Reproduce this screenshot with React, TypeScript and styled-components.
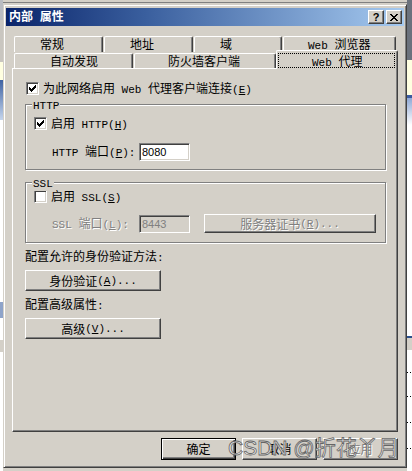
import React from "react";
import styled, { createGlobalStyle, css } from "styled-components";

const FACE = "#d4d0c8";
const SHADOW = "#808080";
const DARK = "#404040";

const Global = createGlobalStyle`
  html, body { margin: 0; padding: 0; background: ${FACE}; }
  body {
    font-family: "Noto Sans CJK SC", "Liberation Sans", sans-serif;
    font-size: 12px;
    color: #000;
  }
`;

/* ---------- text helper ---------- */
const Lat = styled.span`
  font-family: "Liberation Mono", "DejaVu Sans Mono", monospace;
  font-size: 11px;
`;

function txt(s: string): React.ReactNode[] {
  const runs = s.match(/[\x20-\x7E]+|[^\x20-\x7E]+/g) || [];
  return runs.map((run, i) => {
    if (/^[\x20-\x7E]/.test(run)) {
      const segs = run.split(/&(.)/);
      return (
        <Lat key={i}>
          {segs.map((seg, j) => (j % 2 ? <u key={j}>{seg}</u> : seg))}
        </Lat>
      );
    }
    return <span key={i}>{run}</span>;
  });
}

/* ---------- desktop behind ---------- */
const Desktop = styled.div`
  position: relative;
  width: 412px;
  height: 471px;
  overflow: hidden;
  display: flex;
`;
const Strip = styled.div<{ $w: number }>`
  width: ${(p) => p.$w}px;
  flex: none;
  display: flex;
  flex-direction: column;
`;
const Middle = styled.div`
  flex: 1;
  display: flex;
  flex-direction: column;
  background: ${FACE};
`;
const Band = styled.div<{ $h: number; $bg: string }>`
  height: ${(p) => p.$h}px;
  flex: none;
  background: ${(p) => p.$bg};
`;
const dots = "repeating-linear-gradient(90deg, #000 0 1px, #fff 1px 3px)";

/* ---------- window ---------- */
const Window = styled.div`
  position: absolute;
  left: 3px;
  top: 4px;
  width: 404px;
  height: 464px;
  box-sizing: border-box;
  background: ${FACE};
  border: 1px solid;
  border-color: ${FACE} ${DARK} ${DARK} ${FACE};
  box-shadow: inset 1px 1px #fff, inset -1px -1px ${SHADOW};
  padding: 3px 2px 2px 2px;
  display: flex;
  flex-direction: column;
`;
const TitleBar = styled.div`
  height: 18px;
  flex: none;
  display: flex;
  align-items: center;
  justify-content: space-between;
  padding: 0 2px 0 3px;
  background: linear-gradient(90deg, #0a246a 0%, #3a5f9e 35%, #a6caf0 100%);
`;
const Title = styled.div`
  color: #fff;
  font-weight: bold;
  font-size: 12px;
  line-height: 14px;
  white-space: nowrap;
`;
const CapButtons = styled.div`
  display: flex;
  gap: 2px;
`;
const CapButton = styled.div`
  width: 16px;
  height: 14px;
  box-sizing: border-box;
  background: ${FACE};
  border: 1px solid;
  border-color: #fff ${DARK} ${DARK} #fff;
  box-shadow: inset -1px -1px ${SHADOW};
  display: flex;
  align-items: center;
  justify-content: center;
  font: bold 11px "Liberation Sans", sans-serif;
  line-height: 12px;
  color: #000;
`;

/* ---------- tabs ---------- */
const TabArea = styled.div`
  margin: 10px 6px 0 6px;
  display: flex;
  flex-direction: column;
`;
const TabRow = styled.div`
  height: 16px;
  display: flex;
  gap: 1px;
  padding-left: 2px;
`;
const Tab = styled.div<{ $w: number; $pad: number; $front?: boolean }>`
  box-sizing: border-box;
  width: ${(p) => p.$w}px;
  flex: none;
  height: ${(p) => (p.$front ? 15 : 16)}px;
  margin-top: ${(p) => (p.$front ? 1 : 0)}px;
  background: ${FACE};
  border-left: 1px solid #fff;
  border-top: 1px solid #fff;
  border-right: 1px solid ${DARK};
  box-shadow: inset -1px 0 ${SHADOW};
  border-radius: 2px 2px 0 0;
  padding-left: ${(p) => p.$pad}px;
  line-height: 14px;
  white-space: nowrap;
  overflow: hidden;
`;
const SelTab = styled.div<{ $w: number }>`
  position: relative;
  z-index: 2;
  box-sizing: border-box;
  width: ${(p) => p.$w}px;
  flex: none;
  height: 19px;
  margin: -2px 0 0 -1px;
  background: ${FACE};
  border-left: 1px solid #fff;
  border-top: 1px solid #fff;
  border-right: 1px solid ${DARK};
  box-shadow: inset -1px 0 ${SHADOW};
  border-radius: 2px 2px 0 0;
  padding: 2px 2px 0 1px;
`;
const Focus = styled.div<{ $pad: number }>`
  box-sizing: border-box;
  height: 15px;
  border: 1px dotted #000;
  padding-left: ${(p) => p.$pad}px;
  line-height: 13px;
  white-space: nowrap;
`;

/* ---------- panel ---------- */
const Panel = styled.div`
  margin: 0 6px;
  height: 364px;
  flex: none;
  box-sizing: border-box;
  border: 1px solid;
  border-color: #fff ${DARK} ${DARK} #fff;
  box-shadow: inset -1px -1px ${SHADOW};
  padding: 13px 11px 0 12px;
  display: flex;
  flex-direction: column;
  align-items: flex-start;
`;
const CheckRow = styled.div<{ $mt?: number; $ml?: number }>`
  display: flex;
  align-items: center;
  gap: 4px;
  height: 13px;
  margin-top: ${(p) => p.$mt || 0}px;
  margin-left: ${(p) => p.$ml || 0}px;
  line-height: 14px;
  white-space: nowrap;
`;
const Check = styled.span`
  box-sizing: border-box;
  width: 13px;
  height: 13px;
  flex: none;
  background: #fff;
  border: 1px solid;
  border-color: ${SHADOW} #fff #fff ${SHADOW};
  box-shadow: inset 1px 1px ${DARK}, inset -1px -1px ${FACE};
  display: flex;
  align-items: center;
  justify-content: center;
`;
const Group = styled.div<{ $h: number; $pt: number; $mt: number }>`
  position: relative;
  box-sizing: border-box;
  width: 361px;
  height: ${(p) => p.$h}px;
  margin-top: ${(p) => p.$mt}px;
  flex: none;
  border: 1px solid ${SHADOW};
  box-shadow: inset 1px 1px #fff, 1px 1px #fff;
  padding: ${(p) => p.$pt}px 0 0 8px;
  display: flex;
  flex-direction: column;
  align-items: flex-start;
`;
const Legend = styled.span`
  position: absolute;
  top: -8px;
  left: 6px;
  padding: 0 1px;
  background: ${FACE};
  line-height: 14px;
`;
const FieldRow = styled.div<{ $mt: number }>`
  display: flex;
  align-items: center;
  margin: ${(p) => p.$mt}px 0 0 18px;
`;
const FieldLabel = styled.span<{ $disabled?: boolean }>`
  width: 87px;
  flex: none;
  line-height: 14px;
  white-space: nowrap;
  ${(p) =>
    p.$disabled &&
    css`
      color: ${SHADOW};
      text-shadow: 1px 1px #fff;
    `}
`;
const Input = styled.div<{ $disabled?: boolean }>`
  box-sizing: border-box;
  width: 51px;
  height: 18px;
  flex: none;
  background: ${(p) => (p.$disabled ? FACE : "#fff")};
  border: 1px solid;
  border-color: ${SHADOW} #fff #fff ${SHADOW};
  box-shadow: inset 1px 1px ${DARK}, inset -1px -1px ${FACE};
  padding-left: 2px;
  display: flex;
  align-items: center;
  font: 11px "Liberation Sans", sans-serif;
  color: ${(p) => (p.$disabled ? SHADOW : "#000")};
`;
const Caption = styled.div<{ $mt: number }>`
  margin-top: ${(p) => p.$mt}px;
  line-height: 14px;
  white-space: nowrap;
`;
const Button = styled.div<{
  $w: number;
  $h: number;
  $mt?: number;
  $ml?: number;
  $default?: boolean;
  $disabled?: boolean;
}>`
  box-sizing: border-box;
  width: ${(p) => p.$w}px;
  height: ${(p) => p.$h}px;
  flex: none;
  margin-top: ${(p) => p.$mt || 0}px;
  margin-left: ${(p) => p.$ml || 0}px;
  background: ${FACE};
  border: 1px solid;
  border-color: #fff ${DARK} ${DARK} #fff;
  box-shadow: inset -1px -1px ${SHADOW};
  display: flex;
  align-items: center;
  justify-content: center;
  line-height: 14px;
  white-space: nowrap;
  ${(p) =>
    p.$default &&
    css`
      border-color: #000;
      box-shadow: inset 1px 1px #fff, inset -1px -1px ${DARK},
        inset -2px -2px ${SHADOW};
    `}
  ${(p) =>
    p.$disabled &&
    css`
      color: ${SHADOW};
      text-shadow: 1px 1px #fff;
    `}
`;
const ButtonBar = styled.div`
  display: flex;
  justify-content: flex-end;
  gap: 6px;
  margin: 6px 6px 0 0;
`;
const Watermark = styled.div`
  position: absolute;
  left: 224px;
  top: 431px;
  font-family: "Liberation Sans", "Noto Sans CJK SC", sans-serif;
  font-size: 21px;
  line-height: 24px;
  white-space: nowrap;
  color: rgba(240, 240, 240, 0.9);
  -webkit-text-stroke: 0.8px #666666;
  pointer-events: none;
`;

const CheckMark = () => (
  <svg width="7" height="7" viewBox="0 0 7 7" shapeRendering="crispEdges">
    <path
      d="M6 0h1v1h-1z M5 1h2v1h-2z M0 2h1v1h-1z M4 2h3v1h-3z M0 3h2v1h-2z M3 3h3v1h-3z M0 4h5v1h-5z M1 5h3v1h-3z M2 6h1v1h-1z"
      fill="#000"
    />
  </svg>
);

const CloseGlyph = () => (
  <svg width="8" height="7" viewBox="0 0 8 7" shapeRendering="crispEdges">
    <path
      d="M0 0h2v1h-2z M6 0h2v1h-2z M1 1h2v1h-2z M5 1h2v1h-2z M2 2h4v1h-4z M3 3h2v1h-2z M2 4h4v1h-4z M1 5h2v1h-2z M5 5h2v1h-2z M0 6h2v1h-2z M6 6h2v1h-2z"
      fill="#000"
    />
  </svg>
);

export default function App() {
  return (
    <>
      <Global />
      <Desktop>
        <Strip $w={3}>
          <Band $h={20} $bg="#b9bcc2" />
          <Band $h={42} $bg="#c9c6c0" />
          <Band $h={18} $bg="#ffffe1" />
          <Band $h={40} $bg="linear-gradient(180deg,#3f63a3,#c5d5ec)" />
          <Band $h={182} $bg="#ffffff" />
          <Band $h={16} $bg="#8ea3c9" />
          <Band $h={22} $bg="#ffffff" />
          <Band $h={12} $bg={FACE} />
          <Band $h={119} $bg="#ffffff" />
        </Strip>
        <Middle>
          <Band $h={2} $bg={FACE} />
          <Band $h={1} $bg={SHADOW} />
        </Middle>
        <Strip $w={5}>
          <Band $h={60} $bg="#6b727d" />
          <Band $h={35} $bg="#ffffe1" />
          <Band $h={3} $bg="#3b5ba0" />
          <Band $h={27} $bg="linear-gradient(180deg,#8fa9d6,#ffffff)" />
          <Band $h={211} $bg="#ffffff" />
          <Band $h={2} $bg="#2b4f8c" />
          <Band $h={12} $bg={FACE} />
          <Band $h={22} $bg="#ffffff" />
          <Band $h={1} $bg={dots} />
          <Band $h={23} $bg="#ffffff" />
          <Band $h={1} $bg={dots} />
          <Band $h={25} $bg="#ffffff" />
          <Band $h={1} $bg={dots} />
          <Band $h={25} $bg="#ffffff" />
          <Band $h={1} $bg={dots} />
          <Band $h={30} $bg="#ffffff" />
        </Strip>

        <Window>
          <TitleBar>
            <Title>{txt("内部 属性")}</Title>
            <CapButtons>
              <CapButton>?</CapButton>
              <CapButton>
                <CloseGlyph />
              </CapButton>
            </CapButtons>
          </TitleBar>

          <TabArea>
            <TabRow>
              <Tab $w={89} $pad={25}>{txt("常规")}</Tab>
              <Tab $w={89} $pad={25}>{txt("地址")}</Tab>
              <Tab $w={88} $pad={25}>{txt("域")}</Tab>
              <Tab $w={113} $pad={24}>{txt("Web 浏览器")}</Tab>
            </TabRow>
            <TabRow>
              <Tab $w={119} $pad={35} $front>{txt("自动发现")}</Tab>
              <Tab $w={142} $pad={33} $front>{txt("防火墙客户端")}</Tab>
              <SelTab $w={122}>
                <Focus $pad={33}>{txt("Web 代理")}</Focus>
              </SelTab>
            </TabRow>
          </TabArea>

          <Panel>
            <CheckRow $ml={1}>
              <Check>
                <CheckMark />
              </Check>
              <span>{txt("为此网络启用 Web 代理客户端连接(&E)")}</span>
            </CheckRow>

            <Group $h={66} $pt={12} $mt={9}>
              <Legend>{txt("HTTP")}</Legend>
              <CheckRow>
                <Check>
                  <CheckMark />
                </Check>
                <span>{txt("启用 HTTP(&H)")}</span>
              </CheckRow>
              <FieldRow $mt={13}>
                <FieldLabel>{txt("HTTP 端口(&P):")}</FieldLabel>
                <Input>8080</Input>
              </FieldRow>
            </Group>

            <Group $h={61} $pt={7} $mt={12}>
              <Legend>{txt("SSL")}</Legend>
              <CheckRow>
                <Check />
                <span>{txt("启用 SSL(&S)")}</span>
              </CheckRow>
              <FieldRow $mt={11}>
                <FieldLabel $disabled>{txt("SSL 端口(&L):")}</FieldLabel>
                <Input $disabled>8443</Input>
                <Button $w={172} $h={19} $ml={14} $disabled>
                  {txt("服务器证书(&R)...")}
                </Button>
              </FieldRow>
            </Group>

            <Caption $mt={6}>{txt("配置允许的身份验证方法:")}</Caption>
            <Button $w={136} $h={21} $mt={5}>
              {txt("身份验证(&A)...")}
            </Button>
            <Caption $mt={6}>{txt("配置高级属性:")}</Caption>
            <Button $w={136} $h={21} $mt={5}>
              {txt("高级(&V)...")}
            </Button>
          </Panel>

          <ButtonBar>
            <Button $w={75} $h={22} $default>
              {txt("确定")}
            </Button>
            <Button $w={75} $h={22}>
              {txt("取消")}
            </Button>
            <Button $w={75} $h={22} $disabled>
              {txt("应用")}
            </Button>
          </ButtonBar>

          <Watermark>CSDN @折花丫月</Watermark>
        </Window>
      </Desktop>
    </>
  );
}
